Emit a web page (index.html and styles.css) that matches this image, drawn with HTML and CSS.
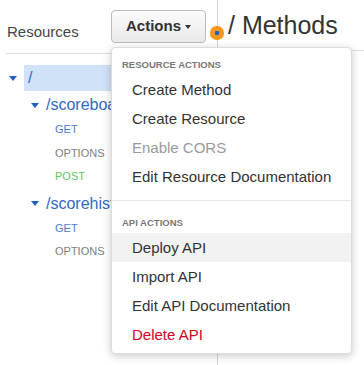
FILE: index.html
```html
<!DOCTYPE html>
<html lang="en">

<head>
    <title>api_methods</title>
    <link rel="stylesheet" href="styles.css">
</head>

<body>
    <div class="page">

        <div class="resources">
            <div class="resHeader">
                <span class="resTitle">Resources</span>
                <div class="actionsWrap">
                    <button class="actionsBtn">Actions <span class="caret"></span></button>

                    <div class="menu">
                        <div class="menuHead">Resource Actions</div>
                        <div class="menuItem">Create Method</div>
                        <div class="menuItem">Create Resource</div>
                        <div class="menuItem disabled">Enable CORS</div>
                        <div class="menuItem">Edit Resource Documentation</div>
                        <div class="menuDivider"></div>
                        <div class="menuHead api">API Actions</div>
                        <div class="menuItem hover">Deploy API</div>
                        <div class="menuItem">Import API</div>
                        <div class="menuItem">Edit API Documentation</div>
                        <div class="menuItem danger">Delete API</div>
                    </div>
                </div>
            </div>

            <div class="tree">
                <div class="node root">
                    <span class="arrow"></span>
                    <span class="path selected">/</span>
                </div>
                <div class="node level1">
                    <span class="arrow"></span>
                    <span class="path">/scoreboard</span>
                </div>
                <div class="method get">GET</div>
                <div class="method options">OPTIONS</div>
                <div class="method post">POST</div>
                <div class="node level1 second">
                    <span class="arrow"></span>
                    <span class="path">/scorehistory</span>
                </div>
                <div class="method get">GET</div>
                <div class="method options">OPTIONS</div>
            </div>
        </div>

        <div class="methods">
            <div class="methodsHeader">
                <span class="dot"></span>
                <h1>/ Methods</h1>
            </div>
        </div>

    </div>
</body>

</html>
```

FILE: styles.css
```css
body {
    margin: 0;
    background-color: white;
    font-family: "Liberation Sans", Arial, sans-serif;
    color: #333;
    overflow: hidden;
}

.page {
    display: flex;
    height: 365px;
}

.resources {
    width: 211px;
    padding-left: 6px;
    border-right: 1px solid #d5d5d5;
}

.resHeader {
    display: flex;
    align-items: center;
    padding: 10px 11px 10px 1px;
    border-bottom: 1px solid #dedede;
}

.resTitle {
    font-size: 15px;
    color: #444;
    margin-top: 10px;
}

.actionsWrap {
    position: relative;
    margin-left: auto;
}

.actionsBtn {
    display: flex;
    align-items: center;
    justify-content: center;
    gap: 4px;
    width: 95px;
    height: 33px;
    padding: 0 0 2px 0;
    font-family: inherit;
    font-size: 15px;
    font-weight: bold;
    color: #333;
    background: linear-gradient(#fbfbfb, #e9e9e9);
    border: 1px solid #bcbcbc;
    border-radius: 4px;
}

.caret {
    width: 0;
    height: 0;
    border-left: 3.5px solid transparent;
    border-right: 3.5px solid transparent;
    border-top: 4px solid #333;
    margin-top: 2px;
}

.menu {
    position: absolute;
    top: calc(100% + 4px);
    left: 0;
    width: 239px;
    padding: 7px 0 4px 0;
    background-color: white;
    border: 1px solid #dcdcdc;
    border-radius: 4px;
    box-shadow: 0 2px 8px rgba(0, 0, 0, 0.22);
    z-index: 10;
}

.menuHead {
    height: 20px;
    line-height: 20px;
    padding-left: 10px;
    font-size: 9.5px;
    font-weight: bold;
    text-transform: uppercase;
    color: #777;
}

.menuHead.api {
    margin-top: 12px;
}

.menuItem {
    height: 29px;
    line-height: 29px;
    padding-left: 20px;
    font-size: 15px;
    color: #333;
}

.menuItem.disabled {
    color: #999;
}

.menuItem.hover {
    background-color: #f2f2f2;
}

.menuItem.danger {
    color: #d0021b;
}

.menuDivider {
    height: 1px;
    margin-top: 9px;
    background-color: #e6e6e6;
}

.tree {
    padding-top: 11px;
}

.node {
    display: flex;
    align-items: center;
    height: 26px;
    font-size: 16px;
    color: #2f69c2;
    white-space: nowrap;
}

.arrow {
    width: 0;
    height: 0;
    border-left: 4px solid transparent;
    border-right: 4px solid transparent;
    border-top: 5px solid #1f5fbf;
    margin-left: 3px;
    margin-right: 7px;
}

.path.selected {
    flex: 1;
    align-self: stretch;
    display: flex;
    align-items: center;
    padding-left: 4px;
    background-color: #d0e2f7;
}

.node.level1 {
    margin-top: 1px;
    padding-left: 22px;
}

.node.second {
    margin-top: 2px;
}

.method {
    height: 23.5px;
    line-height: 23.5px;
    padding-left: 49px;
    font-size: 11px;
}

.method.get {
    color: #4a7cc7;
}

.method.options {
    color: #7d7d7d;
}

.method.post {
    color: #68c56a;
}

.methods {
    flex: 1;
}

.methodsHeader {
    position: relative;
    height: 40px;
    padding: 10px 0 0 10px;
    border-bottom: 1px solid #dedede;
}

.methodsHeader h1 {
    margin: 0;
    font-size: 25px;
    font-weight: normal;
    line-height: 30px;
    color: #333;
}

.dot {
    position: absolute;
    left: -8px;
    top: 26px;
    width: 14px;
    height: 14px;
    border-radius: 50%;
    background: radial-gradient(circle, #1b5fc2 0 2px, #f7981d 2.5px);
    box-shadow: 0 0 1px #f7981d;
}
```
